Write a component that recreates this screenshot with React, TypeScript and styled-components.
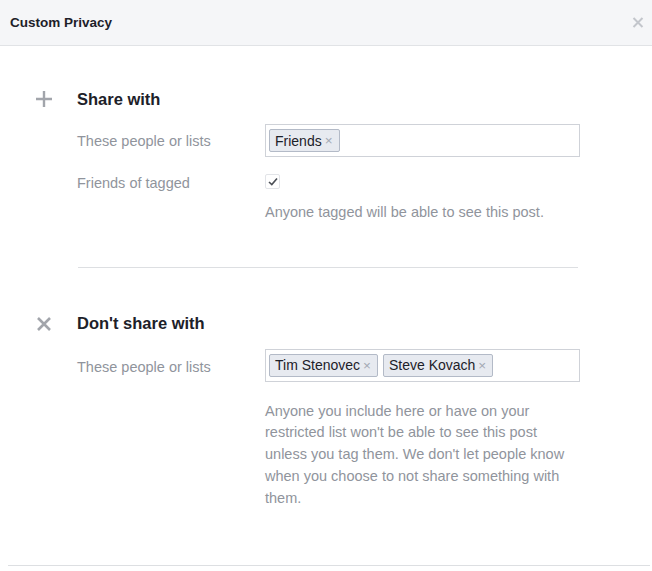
import React from "react";
import styled, { createGlobalStyle } from "styled-components";

const Global = createGlobalStyle`
  html, body { margin: 0; padding: 0; background: #fff; }
  body { font-family: "Liberation Sans", Arial, sans-serif; }
`;

const Dialog = styled.div`
  width: 652px;
  height: 571px;
  display: flex;
  flex-direction: column;
  background: #fff;
  box-sizing: border-box;
`;

const Header = styled.div`
  height: 46px;
  box-sizing: border-box;
  display: flex;
  align-items: center;
  justify-content: space-between;
  padding: 0 6px 0 10px;
  background: #f5f6f8;
  border-bottom: 1px solid #e1e3e6;
`;

const Title = styled.div`
  font-size: 13.5px;
  font-weight: bold;
  color: #1d2129;
`;

const Close = styled.div`
  width: 16px;
  height: 16px;
  display: flex;
  align-items: center;
  justify-content: center;
`;

const Body = styled.div`
  flex: 1;
  display: flex;
  flex-direction: column;
  padding: 41px 0 0 0;
`;

const Section = styled.div<{ $mt?: number }>`
  display: flex;
  flex-direction: column;
  padding-left: 34px;
  margin-top: ${(p) => p.$mt ?? 0}px;
`;

const SectionHead = styled.div`
  display: flex;
  align-items: center;
  height: 24px;
  margin-bottom: 13px;
`;

const IconBox = styled.div`
  width: 20px;
  height: 20px;
  display: flex;
  align-items: center;
  justify-content: center;
  margin-right: 23px;
`;

const HeadText = styled.div`
  font-size: 16.5px;
  font-weight: bold;
  color: #1d2129;
`;

const Row = styled.div<{ $mb?: number }>`
  display: grid;
  grid-template-columns: 188px 315px;
  align-items: center;
  padding-left: 43px;
  margin-bottom: ${(p) => p.$mb ?? 0}px;
`;

const Label = styled.div<{ $dy?: number }>`
  font-size: 14.5px;
  color: #90949c;
  padding-top: ${(p) => p.$dy ?? 0}px;
`;

const TokenInput = styled.div`
  height: 33px;
  box-sizing: border-box;
  border: 1px solid #cfd2d8;
  display: flex;
  align-items: center;
  gap: 5px;
  padding: 0 3px;
  background: #fff;
`;

const Token = styled.span`
  display: inline-flex;
  align-items: center;
  height: 23px;
  box-sizing: border-box;
  padding: 0 6px 0 5px;
  background: #e7eaf0;
  border: 1px solid #b3bac7;
  border-radius: 2px;
  font-size: 14px;
  color: #1d2129;
`;

const TokenX = styled.span`
  color: #a2a8b3;
  font-size: 13.5px;
  margin-left: 3px;
`;

const Check = styled.div`
  width: 15px;
  height: 15px;
  box-sizing: border-box;
  border: 1px solid #e2e4e8;
  border-radius: 2px;
  display: flex;
  align-items: center;
  justify-content: center;
`;

const Help = styled.div<{ $w?: number }>`
  grid-column: 2;
  font-size: 14.5px;
  line-height: 21.7px;
  color: #90949c;
  max-width: ${(p) => p.$w ?? 320}px;
`;

const Divider = styled.hr`
  width: 500px;
  margin: 0 0 0 78px;
  border: 0;
  border-top: 1px solid #dddfe2;
`;

const Footer = styled.div`
  margin: auto 2px 5px 8px;
  border-top: 1px solid #dddfe2;
`;

const tagX = "\u00d7";

export default function App() {
  return (
    <>
      <Global />
      <Dialog>
        <Header>
          <Title>Custom Privacy</Title>
          <Close>
            <svg width="12" height="11" viewBox="0 0 12 11">
              <path d="M1.5 1L10.5 10M10.5 1L1.5 10" stroke="#c3c6cc" strokeWidth="2" />
            </svg>
          </Close>
        </Header>
        <Body>
          <Section>
            <SectionHead>
              <IconBox>
                <svg width="16" height="16" viewBox="0 0 16 16">
                  <path d="M8 0V16M0 8H16" stroke="#a2a5ab" strokeWidth="2.4" />
                </svg>
              </IconBox>
              <HeadText>Share with</HeadText>
            </SectionHead>
            <Row $mb={15}>
              <Label>These people or lists</Label>
              <TokenInput>
                <Token>
                  Friends<TokenX>{tagX}</TokenX>
                </Token>
              </TokenInput>
            </Row>
            <Row $mb={11}>
              <Label $dy={3}>Friends of tagged</Label>
              <Check>
                <svg width="10" height="9" viewBox="0 0 10 9">
                  <path d="M1 5L3.8 7.5L9 1.5" stroke="#4b4f56" strokeWidth="1.6" fill="none" />
                </svg>
              </Check>
            </Row>
            <Row $mb={43}>
              <Help>Anyone tagged will be able to see this post.</Help>
            </Row>
          </Section>
          <Divider />
          <Section $mt={44}>
            <SectionHead>
              <IconBox>
                <svg width="16" height="16" viewBox="0 0 16 16">
                  <path d="M2 2L14 14M14 2L2 14" stroke="#a2a5ab" strokeWidth="2.6" />
                </svg>
              </IconBox>
              <HeadText>Don't share with</HeadText>
            </SectionHead>
            <Row $mb={19}>
              <Label $dy={3}>These people or lists</Label>
              <TokenInput>
                <Token>
                  Tim Stenovec<TokenX>{tagX}</TokenX>
                </Token>
                <Token>
                  Steve Kovach<TokenX>{tagX}</TokenX>
                </Token>
              </TokenInput>
            </Row>
            <Row>
              <Help $w={306}>
                Anyone you include here or have on your restricted list won't be able to see this post
                unless you tag them. We don't let people know when you choose to not share something
                with them.
              </Help>
            </Row>
          </Section>
          <Footer />
        </Body>
      </Dialog>
    </>
  );
}
